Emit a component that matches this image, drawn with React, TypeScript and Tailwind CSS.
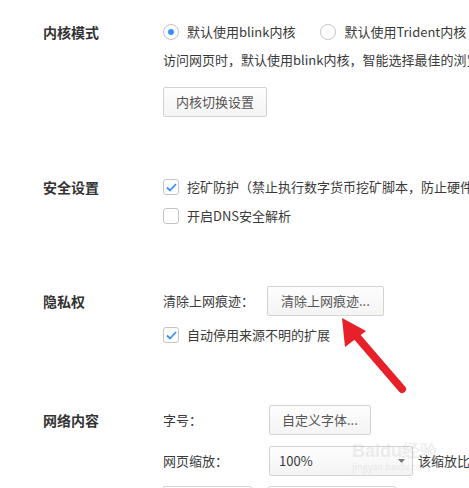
import type { ReactNode } from "react"

function Radio({ checked, label }: { checked?: boolean; label: string }) {
  return (
    <label className="flex items-center gap-2 whitespace-nowrap">
      <span className="flex h-4 w-4 items-center justify-center rounded-full border border-[#c4c4c4] bg-white">
        {checked && <span className="h-[6px] w-[6px] rounded-full bg-[#3d8fff]" />}
      </span>
      <span>{label}</span>
    </label>
  )
}

function Checkbox({ checked, label }: { checked?: boolean; label: string }) {
  return (
    <label className="flex h-5 items-center gap-2 whitespace-nowrap">
      <span className="flex h-4 w-4 items-center justify-center rounded-[3px] border border-[#c4c4c4] bg-white">
        {checked && (
          <svg width="11" height="9" viewBox="0 0 11 9" fill="none">
            <path d="M1 4.5 L4 7.5 L10 1" stroke="#3d8fff" strokeWidth="1.8" />
          </svg>
        )}
      </span>
      <span>{label}</span>
    </label>
  )
}

function Button({ children, className = "" }: { children: ReactNode; className?: string }) {
  return (
    <button
      className={`h-[30px] rounded-[2px] border border-[#d3d3d3] bg-gradient-to-b from-[#fdfdfd] to-[#f4f4f4] px-[12px] text-[13px] whitespace-nowrap text-[#555] ${className}`}
    >
      {children}
    </button>
  )
}

function Section({ title, titleH, children }: { title: string; titleH: string; children: ReactNode }) {
  return (
    <div className="flex">
      <div className={`flex w-[120px] shrink-0 items-center text-[14px] font-bold text-[#333] ${titleH}`}>{title}</div>
      <div className="flex flex-col">{children}</div>
    </div>
  )
}

export default function App() {
  return (
    <div
      className="relative h-[488px] w-[469px] overflow-hidden bg-white pt-[22px] pl-[43px] text-[13px] leading-5 text-[#3a3a3a]"
      style={{ fontFamily: '"Noto Sans CJK SC", "Microsoft YaHei", sans-serif' }}
    >
      <div className="flex flex-col gap-[60px]">
        {/* 内核模式 */}
        <Section title="内核模式" titleH="h-5">
          <div className="flex h-5 items-center gap-[25px]">
            <Radio checked label="默认使用blink内核" />
            <Radio label="默认使用Trident内核" />
          </div>
          <div className="mt-2 whitespace-nowrap">访问网页时，默认使用blink内核，智能选择最佳的浏览器内核</div>
          <div className="mt-[17px]">
            <Button>内核切换设置</Button>
          </div>
        </Section>

        {/* 安全设置 */}
        <Section title="安全设置" titleH="h-5">
          <div className="flex flex-col gap-[9px]">
            <Checkbox checked label="挖矿防护（禁止执行数字货币挖矿脚本，防止硬件资源被占用）" />
            <Checkbox label="开启DNS安全解析" />
          </div>
        </Section>

        {/* 隐私权 */}
        <Section title="隐私权" titleH="h-[30px]">
          <div className="flex h-[30px] items-center">
            <span className="w-[104px] whitespace-nowrap">清除上网痕迹：</span>
            <Button className="px-[13px]">清除上网痕迹...</Button>
          </div>
          <div className="mt-[9px]">
            <Checkbox checked label="自动停用来源不明的扩展" />
          </div>
        </Section>

        {/* 网络内容 */}
        <Section title="网络内容" titleH="h-[30px]">
          <div className="flex h-[30px] items-center">
            <span className="w-[106px] whitespace-nowrap">字号：</span>
            <Button>自定义字体...</Button>
          </div>
          <div className="mt-[11px] flex h-[30px] items-center">
            <span className="w-[106px] whitespace-nowrap">网页缩放：</span>
            <div className="flex h-[30px] w-[144px] items-center justify-between rounded-[2px] border border-[#d3d3d3] bg-gradient-to-b from-[#fdfdfd] to-[#f4f4f4] pr-[7px] pl-[9px]">
              <span>100%</span>
              <svg width="7" height="4" viewBox="0 0 7 4">
                <polygon points="0,0 7,0 3.5,4" fill="#777" />
              </svg>
            </div>
            <span className="ml-[5px] whitespace-nowrap">该缩放比例将应用于所有网页</span>
          </div>
          <div className="mt-[10px] flex gap-[16px]">
            <div className="h-[30px] w-[89px] rounded-[2px] border border-[#d3d3d3]" />
            <div className="h-[30px] w-[128px] rounded-[2px] border border-[#d3d3d3]" />
          </div>
        </Section>
      </div>

      {/* red arrow annotation */}
      <svg className="pointer-events-none absolute top-0 left-0" width="469" height="488">
        <line x1="402" y1="389" x2="352" y2="331" stroke="#e8202a" strokeWidth="8" strokeLinecap="round" />
        <polygon points="342,318 345,347 366,331" fill="#e8202a" />
      </svg>

      {/* watermark */}
      <div className="pointer-events-none absolute top-[442px] left-[352px] flex flex-col items-start leading-none text-[#000] opacity-[0.06]">
        <span className="text-[18px] font-bold" style={{ fontFamily: "Arial, sans-serif" }}>Baidu经验</span>
        <span className="mt-[2px] text-[9px]">jingyan.baidu.com</span>
      </div>
    </div>
  )
}
